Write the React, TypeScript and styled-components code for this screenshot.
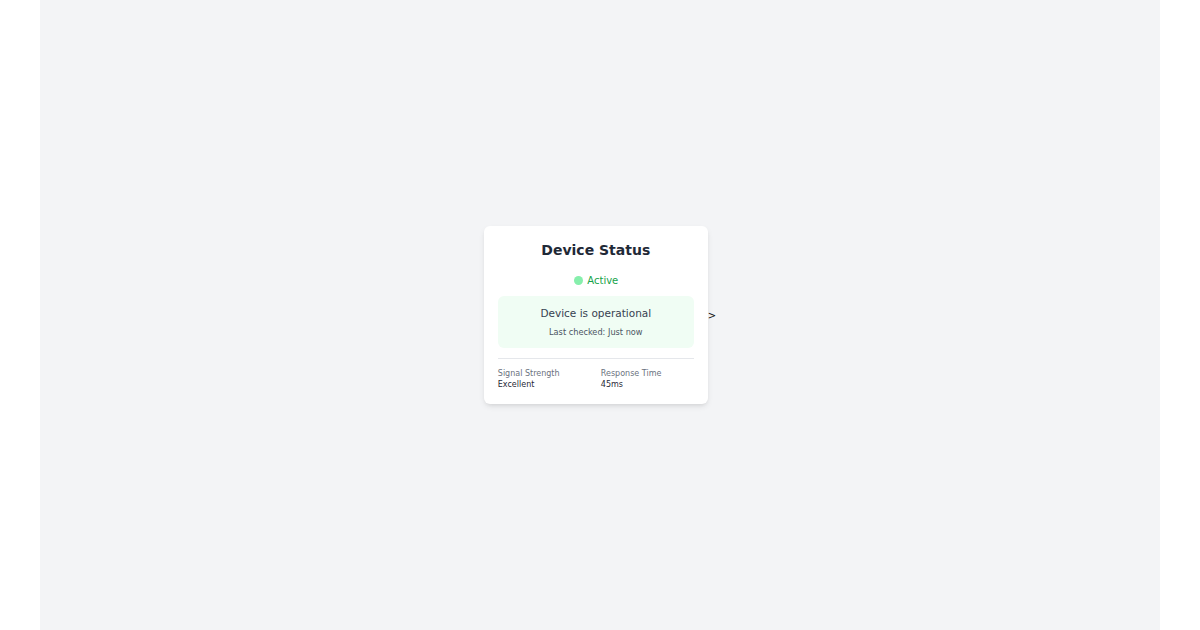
import styled, { createGlobalStyle } from "styled-components";

const GlobalStyle = createGlobalStyle`
  html, body {
    margin: 0;
    padding: 0;
    background: #ffffff;
    font-family: "DejaVu Sans", "Liberation Sans", sans-serif;
  }
`;

const Page = styled.main`
  max-width: 1120px;
  height: 630px;
  margin: 0 auto;
  background: #f3f4f6;
  display: flex;
  align-items: center;
  justify-content: center;
  font-size: 10px;
  color: #111111;
`;

const Card = styled.section`
  width: 224px;
  box-sizing: border-box;
  padding: 15px 14px 14px;
  background: #ffffff;
  border-radius: 6px;
  box-shadow: 0 3px 6px -1px rgba(0, 0, 0, 0.1), 0 2px 4px -2px rgba(0, 0, 0, 0.08);
`;

const Title = styled.h2`
  margin: 0 0 14px;
  font-size: 14px;
  line-height: 18px;
  font-weight: 700;
  text-align: center;
  color: #1f2937;
`;

const StatusRow = styled.div`
  display: flex;
  align-items: center;
  justify-content: center;
  gap: 4px;
  margin-bottom: 8px;
  font-size: 10px;
  line-height: 15px;
  color: #16a34a;
`;

const Dot = styled.span`
  width: 9px;
  height: 9px;
  margin-left: 1px;
  border-radius: 50%;
  background: #86efac;
`;

const Notice = styled.div`
  background: #f0fdf4;
  border-radius: 6px;
  padding: 10px;
  text-align: center;
`;

const NoticeTitle = styled.p`
  margin: 0 0 6px;
  font-size: 10.5px;
  line-height: 14px;
  color: #374151;
`;

const NoticeSub = styled.p`
  margin: 0;
  font-size: 8.2px;
  line-height: 12px;
  color: #4b5563;
`;

const Stats = styled.div`
  margin-top: 10px;
  padding-top: 9px;
  border-top: 1px solid #e5e7eb;
  display: grid;
  grid-template-columns: 1fr 1fr;
  column-gap: 10px;
`;

const Stat = styled.div`
  display: flex;
  flex-direction: column;
`;

const Label = styled.span`
  font-size: 8px;
  line-height: 11px;
  color: #6b7280;
`;

const Value = styled.span`
  font-size: 8px;
  line-height: 11px;
  color: #1f2937;
`;

const App = () => {
  return (
    <>
      <GlobalStyle />
      <Page>
        <Card>
          <Title>Device Status</Title>
          <StatusRow>
            <Dot />
            Active
          </StatusRow>
          <Notice>
            <NoticeTitle>Device is operational</NoticeTitle>
            <NoticeSub>Last checked: Just now</NoticeSub>
          </Notice>
          <Stats>
            <Stat>
              <Label>Signal Strength</Label>
              <Value>Excellent</Value>
            </Stat>
            <Stat>
              <Label>Response Time</Label>
              <Value>45ms</Value>
            </Stat>
          </Stats>
        </Card>
        &gt;
      </Page>
    </>
  );
};

export default App;
